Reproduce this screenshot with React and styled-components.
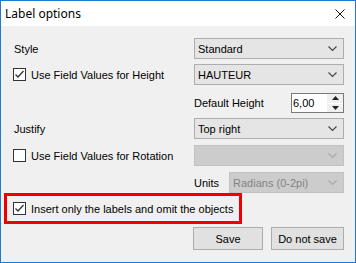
import React from 'react'
import styled, { createGlobalStyle } from 'styled-components'

const GlobalStyle = createGlobalStyle`
  body {
    margin: 0;
    font-family: "Liberation Sans", Arial, sans-serif;
    font-size: 11px;
    color: #000;
  }
`;

const Window = styled.div`
  box-sizing: border-box;
  width: 356px;
  height: 263px;
  border: 1px solid #1c7bcf;
  background: #f0f0f0;
  display: flex;
  flex-direction: column;
`;

const TitleBar = styled.div`
  height: 25px;
  background: #fff;
  display: flex;
  align-items: center;
  justify-content: space-between;
  padding: 0 10px 0 4px;
  font-family: "Noto Sans", "Open Sans", sans-serif;
  font-size: 12px;
`;

const Close = styled.svg`
  width: 10px;
  height: 10px;
`;

const Body = styled.div`
  padding: 12px 11px 0 12px;
  display: flex;
  flex-direction: column;
`;

const Row = styled.div`
  display: grid;
  grid-template-columns: 1fr 150px;
  align-items: center;
  margin-top: ${p => p.$gap || 0}px;
  height: ${p => p.$h || 21}px;
`;

const Label = styled.span`
  padding-left: 1px;
`;

const Right = styled.div`
  display: flex;
  align-items: center;
  justify-content: ${p => p.$justify || 'flex-start'};
  gap: ${p => p.$gap || 0}px;
`;

const Combo = styled.div`
  box-sizing: border-box;
  height: 21px;
  width: ${p => p.$w || 150}px;
  border: 1px solid ${p => (p.$disabled ? '#c2c2c2' : '#adadad')};
  background: ${p => (p.$disabled ? '#cccccc' : '#e5e5e5')};
  color: ${p => (p.$disabled ? '#838383' : '#000')};
  display: flex;
  align-items: center;
  justify-content: space-between;
  padding: 0 6px 0 3px;
`;

const Chevron = styled.svg`
  width: 9px;
  height: 6px;
`;

const Check = styled.label`
  display: flex;
  align-items: center;
  gap: 5px;
`;

const Box = styled.span`
  box-sizing: border-box;
  width: 13px;
  height: 13px;
  border: 1px solid #333;
  background: #fff;
  display: flex;
  align-items: center;
  justify-content: center;
`;

const Spinner = styled.div`
  box-sizing: border-box;
  width: 53px;
  height: 20px;
  border: 1px solid #7a7a7a;
  background: #fff;
  display: flex;
  align-items: center;
  justify-content: space-between;
  padding-left: 1px;
`;

const SpinButtons = styled.div`
  width: 15px;
  height: 18px;
  display: flex;
  flex-direction: column;
  border-left: 1px solid #f0f0f0;
`;

const SpinButton = styled.div`
  flex: 1;
  background: #f0f0f0;
  display: flex;
  align-items: center;
  justify-content: center;
  & + & {
    border-top: 1px solid #fff;
  }
`;

const Highlight = styled.div`
  box-sizing: border-box;
  width: 238px;
  height: 31px;
  margin-left: -9px;
  border: 3px solid #ee0000;
  padding-left: 6px;
  display: flex;
  align-items: center;
`;

const Buttons = styled.div`
  display: flex;
  justify-content: flex-end;
  gap: 8px;
  margin-top: 3px;
`;

const Button = styled.button`
  box-sizing: border-box;
  height: 23px;
  width: ${p => p.$w}px;
  border: 1px solid #adadad;
  background: #e1e1e1;
  font: inherit;
  color: #000;
  padding: 0;
`;

const ChevronIcon = ({ color = '#444' }) => (
  <Chevron viewBox="0 0 9 6">
    <path d="M0.5 0.5 L4.5 4.5 L8.5 0.5" fill="none" stroke={color} strokeWidth="1.1" />
  </Chevron>
);

const Select = ({ value, disabled, w }) => (
  <Combo $disabled={disabled} $w={w}>
    <span>{value}</span>
    <ChevronIcon color={disabled ? '#a8a8a8' : '#444'} />
  </Combo>
);

const CheckBox = ({ checked, children }) => (
  <Check>
    <Box>
      {checked && (
        <svg width="11" height="11" viewBox="0 0 11 11">
          <path d="M1.5 5.5 L4 8 L9.5 2" fill="none" stroke="#333" strokeWidth="1.3" />
        </svg>
      )}
    </Box>
    <span>{children}</span>
  </Check>
);

export default function App() {
  return (
    <>
      <GlobalStyle />
      <Window>
        <TitleBar>
          <span>Label options</span>
          <Close viewBox="0 0 10 10">
            <path d="M0.5 0.5 L9.5 9.5 M9.5 0.5 L0.5 9.5" stroke="#111" strokeWidth="1" />
          </Close>
        </TitleBar>
        <Body>
          <Row>
            <Label>Style</Label>
            <Select value="Standard" />
          </Row>
          <Row $gap={5}>
            <CheckBox checked>Use Field Values for Height</CheckBox>
            <Select value="HAUTEUR" />
          </Row>
          <Row $gap={8} $h={20}>
            <span />
            <Right $justify="space-between">
              <span>Default Height</span>
              <Spinner>
                <span>6,00</span>
                <SpinButtons>
                  <SpinButton>
                    <svg width="7" height="4" viewBox="0 0 7 4"><path d="M3.5 0 L7 4 L0 4 Z" fill="#222" /></svg>
                  </SpinButton>
                  <SpinButton>
                    <svg width="7" height="4" viewBox="0 0 7 4"><path d="M0 0 L7 0 L3.5 4 Z" fill="#222" /></svg>
                  </SpinButton>
                </SpinButtons>
              </Spinner>
            </Right>
          </Row>
          <Row $gap={5}>
            <Label>Justify</Label>
            <Select value="Top right" />
          </Row>
          <Row $gap={6}>
            <CheckBox>Use Field Values for Rotation</CheckBox>
            <Select value="" disabled />
          </Row>
          <Row $gap={6}>
            <span />
            <Right $justify="flex-end" $gap={10}>
              <span>Units</span>
              <Select value="Radians (0-2pi)" disabled w={116} />
            </Right>
          </Row>
          <Highlight>
            <CheckBox checked>Insert only the labels and omit the objects</CheckBox>
          </Highlight>
          <Buttons>
            <Button $w={70}>Save</Button>
            <Button $w={73}>Do not save</Button>
          </Buttons>
        </Body>
      </Window>
    </>
  );
}
